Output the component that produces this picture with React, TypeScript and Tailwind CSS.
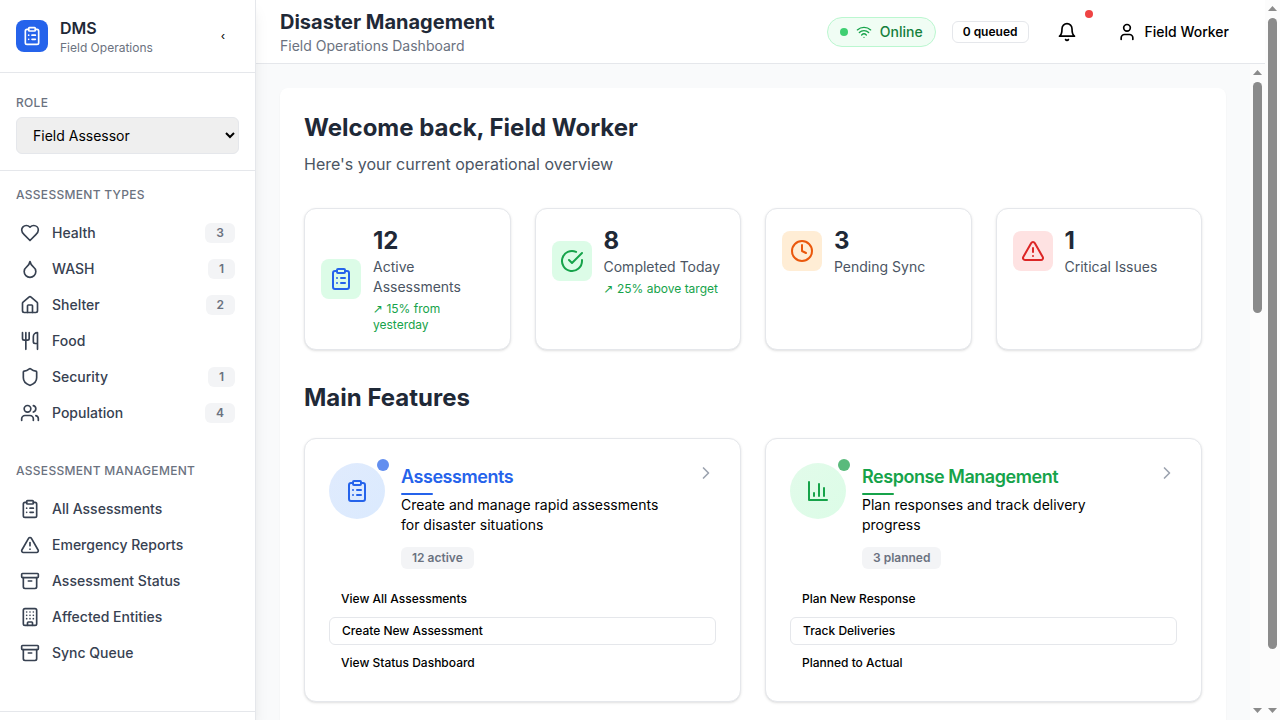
import React from "react";
import {
  Droplet, House, Utensils, Shield, Users, ClipboardList, TriangleAlert, Archive, Building,
  User, Wifi, Clock, ChevronRight,
} from "lucide-react";

type IconType = React.ComponentType<{ className?: string }>;
type NavItem = { icon: IconType; label: string; badge?: string };

function Glyph({ className, paths }: { className?: string; paths: string[] }) {
  return (
    <svg viewBox="0 0 24 24" fill="none" stroke="currentColor" strokeWidth="2" strokeLinecap="round" strokeLinejoin="round" className={className}>
      {paths.map((d) => <path key={d} d={d} />)}
    </svg>
  );
}

const ColumnChart: IconType = ({ className }) => (
  <Glyph className={className} paths={["M3 3v18h18", "M18 17V9", "M13 17V5", "M8 17v-3"]} />
);
const Heart: IconType = ({ className }) => (
  <Glyph className={className} paths={["M19 14c1.49-1.46 3-3.21 3-5.5A5.5 5.5 0 0 0 16.5 3c-1.76 0-3 .5-4.5 2-1.5-1.5-2.74-2-4.5-2A5.5 5.5 0 0 0 2 8.5c0 2.3 1.5 4.05 3 5.5l7 7Z"]} />
);
const Bell: IconType = ({ className }) => (
  <Glyph className={className} paths={["M6 8a6 6 0 0 1 12 0c0 7 3 9 3 9H3s3-2 3-9", "M10.3 21a1.94 1.94 0 0 0 3.4 0"]} />
);
const CheckCircle: IconType = ({ className }) => (
  <Glyph className={className} paths={["M22 11.08V12a10 10 0 1 1-5.93-9.14", "m9 11 3 3L22 4"]} />
);

const types: NavItem[] = [
  { icon: Heart, label: "Health", badge: "3" },
  { icon: Droplet, label: "WASH", badge: "1" },
  { icon: House, label: "Shelter", badge: "2" },
  { icon: Utensils, label: "Food" },
  { icon: Shield, label: "Security", badge: "1" },
  { icon: Users, label: "Population", badge: "4" },
];

const management: NavItem[] = [
  { icon: ClipboardList, label: "All Assessments" },
  { icon: TriangleAlert, label: "Emergency Reports" },
  { icon: Archive, label: "Assessment Status" },
  { icon: Building, label: "Affected Entities" },
  { icon: Archive, label: "Sync Queue" },
];

function NavSection({ title, items }: { title: string; items: NavItem[] }) {
  return (
    <section className="flex flex-col">
      <h3 className="text-xs leading-4 font-medium tracking-[0.3px] text-[#6b7280] uppercase">{title}</h3>
      <ul className="mt-3 flex flex-col">
        {items.map(({ icon: Icon, label, badge }) => (
          <li key={label} className="flex h-9 items-center px-1 text-[#374151]">
            <Icon className="size-5 shrink-0" />
            <span className="ml-3 text-sm font-medium">{label}</span>
            {badge && (
              <span className="ml-auto rounded-md bg-[#f3f4f6] px-[11px] py-0.5 text-xs leading-4 font-semibold text-[#6b7280]">{badge}</span>
            )}
          </li>
        ))}
      </ul>
    </section>
  );
}

function Sidebar() {
  return (
    <aside className="z-10 flex w-64 shrink-0 flex-col border-r border-[#e5e7eb] bg-white shadow-lg">
      <div className="flex h-[73px] shrink-0 items-center border-b border-[#e5e7eb] px-4">
        <div className="flex size-8 items-center justify-center rounded-lg bg-[#2563eb] text-white">
          <ClipboardList className="size-5" />
        </div>
        <div className="ml-3">
          <div className="text-base leading-6 font-semibold text-[#1f2937]">DMS</div>
          <div className="text-xs leading-4 text-[#6b7280]">Field Operations</div>
        </div>
        <button className="ml-auto flex w-8 justify-center font-['Liberation_Sans',sans-serif] text-xs text-black">‹</button>
      </div>
      <div className="flex h-[98px] shrink-0 flex-col border-b border-[#e5e7eb] px-4 pt-[22px]">
        <label className="text-xs leading-4 font-medium tracking-[0.3px] text-[#6b7280]">ROLE</label>
        <select className="mt-1.5 h-[37px] w-full rounded-md border border-[#e5e7eb] bg-[#efefef] px-3 text-sm text-black">
          <option>Field Assessor</option>
        </select>
      </div>
      <nav className="flex min-h-0 flex-1 flex-col gap-8 overflow-hidden px-4 pt-4">
        <NavSection title="Assessment Types" items={types} />
        <NavSection title="Assessment Management" items={management} />
      </nav>
      <div className="h-[9px] shrink-0 border-t border-[#e5e7eb]" />
    </aside>
  );
}

function Header() {
  return (
    <header className="flex h-16 shrink-0 items-center border-b border-[#e5e7eb] bg-white pr-9 pl-6 shadow-sm">
      <div>
        <h1 className="text-xl leading-7 font-bold text-[#1f2937]">Disaster Management</h1>
        <p className="text-sm leading-5 text-[#6b7280]">Field Operations Dashboard</p>
      </div>
      <div className="ml-auto flex items-center">
        <div className="flex h-[30px] items-center rounded-full border border-[#bbf7d0] bg-[#f0fdf4] px-3 text-sm font-medium text-[#15803d]">
          <span className="size-2 rounded-full bg-[#3fcf72]" />
          <Wifi className="ml-2 size-4 text-[#16a34a]" />
          <span className="ml-2">Online</span>
        </div>
        <div className="ml-4 flex h-[22px] items-center rounded-md border border-[#e5e7eb] px-2.5 text-xs font-semibold text-black">0 queued</div>
        <div className="relative ml-4 flex h-9 w-11 items-center justify-center">
          <Bell className="size-5 text-black" />
          <span className="absolute top-[-4px] right-[-4px] size-2 rounded-full bg-[#ef4444]" />
        </div>
        <div className="ml-7 flex items-center gap-2 text-sm font-medium text-black">
          <User className="size-5" />
          Field Worker
        </div>
      </div>
    </header>
  );
}

type Stat = { icon: IconType; tone: string; value: string; label: string; trend?: string };

const stats: Stat[] = [
  { icon: ClipboardList, tone: "bg-[#dcfce7] text-[#2563eb]", value: "12", label: "Active Assessments", trend: "15% from yesterday" },
  { icon: CheckCircle, tone: "bg-[#dcfce7] text-[#16a34a]", value: "8", label: "Completed Today", trend: "25% above target" },
  { icon: Clock, tone: "bg-[#ffedd5] text-[#ea580c]", value: "3", label: "Pending Sync" },
  { icon: TriangleAlert, tone: "bg-[#fee2e2] text-[#dc2626]", value: "1", label: "Critical Issues" },
];

function StatCard({ icon: Icon, tone, value, label, trend }: Stat) {
  return (
    <div className="rounded-xl border border-[#e5e7eb] bg-white p-4 shadow-sm">
      <div className="flex items-center gap-3">
        <div className={`flex size-10 shrink-0 items-center justify-center rounded-lg ${tone}`}>
          <Icon className="size-6" />
        </div>
        <div>
          <div className="text-2xl leading-8 font-bold text-[#1f2937]">{value}</div>
          <div className="text-sm leading-5 text-[#4b5563]">{label}</div>
          {trend && (
            <div className="mt-1 text-xs leading-4 text-[#16a34a]">
              <span className="font-['DejaVu_Sans',sans-serif] leading-none">↗</span> {trend}
            </div>
          )}
        </div>
      </div>
    </div>
  );
}

const features = [
  {
    icon: ClipboardList, circle: "from-[#e0ebfd] to-[#dbeafe] text-[#2563eb]", dot: "bg-[#628eef]", title: "Assessments",
    titleTone: "text-[#2563eb]", bar: "bg-[#2563eb]", text: "Create and manage rapid assessments for disaster situations",
    badge: "12 active", links: ["View All Assessments", "Create New Assessment", "View Status Dashboard"],
  },
  {
    icon: ColumnChart, circle: "from-[#e2fbea] to-[#dcfce7] text-[#16a34a]", dot: "bg-[#5aba7c]", title: "Response Management",
    titleTone: "text-[#16a34a]", bar: "bg-[#16a34a]", text: "Plan responses and track delivery progress",
    badge: "3 planned", links: ["Plan New Response", "Track Deliveries", "Planned to Actual"],
  },
];

function FeatureCard(f: (typeof features)[number]) {
  const Icon = f.icon;
  return (
    <article className="h-[264px] rounded-xl border border-[#e5e7eb] bg-white p-6 shadow-sm">
      <div className="flex items-start">
        <div className={`relative flex size-14 shrink-0 items-center justify-center rounded-full bg-linear-to-br ${f.circle}`}>
          <Icon className="size-6" />
          <span className={`absolute -top-1 -right-1 size-3 rounded-full ${f.dot}`} />
        </div>
        <div className="ml-4 w-[264px]">
          <h3 className={`text-lg leading-7 font-semibold tracking-[-0.45px] ${f.titleTone}`}>{f.title}</h3>
          <div className={`mt-0.5 h-0.5 w-8 rounded-full ${f.bar}`} />
          <p className="text-sm leading-5 text-black">{f.text}</p>
          <div className="mt-3 flex">
            <span className="rounded-md bg-[#f3f4f6] px-[11px] py-[3px] text-xs leading-4 font-semibold text-[#6b7280]">{f.badge}</span>
          </div>
        </div>
        <ChevronRight className="ml-auto size-5 text-[#9ca3af]" />
      </div>
      <div className="mt-4 flex flex-col gap-1 text-xs font-medium text-black">
        <a className="flex h-7 items-center px-3">{f.links[0]}</a>
        <a className="flex h-7 items-center rounded-md border border-[#e5e7eb] px-3">{f.links[1]}</a>
        <a className="flex h-7 items-center px-3">{f.links[2]}</a>
      </div>
    </article>
  );
}

function ScrollTrack({ thumb }: { thumb: string }) {
  return (
    <div className="flex w-[15px] shrink-0 flex-col items-center bg-[#fcfcfc]">
      <svg viewBox="0 0 15 18" className="h-[18px] w-[15px] shrink-0" fill="#8b8b8b"><path d="M3 11 7.5 6 12 11Z" /></svg>
      <div className={`w-[9px] shrink-0 rounded-full bg-[#8b8b8b] ${thumb}`} />
      <svg viewBox="0 0 15 15" className="mt-auto h-[15px] w-[15px] shrink-0" fill="#8b8b8b"><path d="M3 3 7.5 8 12 3Z" /></svg>
    </div>
  );
}

export default function App() {
  return (
    <div className="flex h-[720px] w-[1280px] overflow-hidden bg-[#f9fafb] font-['Inter',sans-serif]">
      <Sidebar />
      <div className="flex min-w-0 flex-1 flex-col">
        <Header />
        <div className="flex min-h-0 flex-1">
          <main className="min-w-0 flex-1 overflow-hidden bg-[#f9fafb] p-6">
            <div className="h-[900px] rounded-lg bg-white p-6 shadow-xs">
              <h2 className="text-2xl leading-8 font-bold text-[#1f2937]">Welcome back, Field Worker</h2>
              <p className="mt-2 text-base leading-6 text-[#4b5563]">Here's your current operational overview</p>
              <div className="mt-8 grid grid-cols-4 gap-6">
                {stats.map((s) => <StatCard key={s.label} {...s} />)}
              </div>
              <h2 className="mt-8 text-2xl leading-8 font-bold text-[#1f2937]">Main Features</h2>
              <div className="mt-6 grid grid-cols-2 gap-6">
                {features.map((f) => <FeatureCard key={f.title} {...f} />)}
              </div>
            </div>
          </main>
          <ScrollTrack thumb="h-[231px]" />
        </div>
      </div>
      <ScrollTrack thumb="h-[631px]" />
    </div>
  );
}
